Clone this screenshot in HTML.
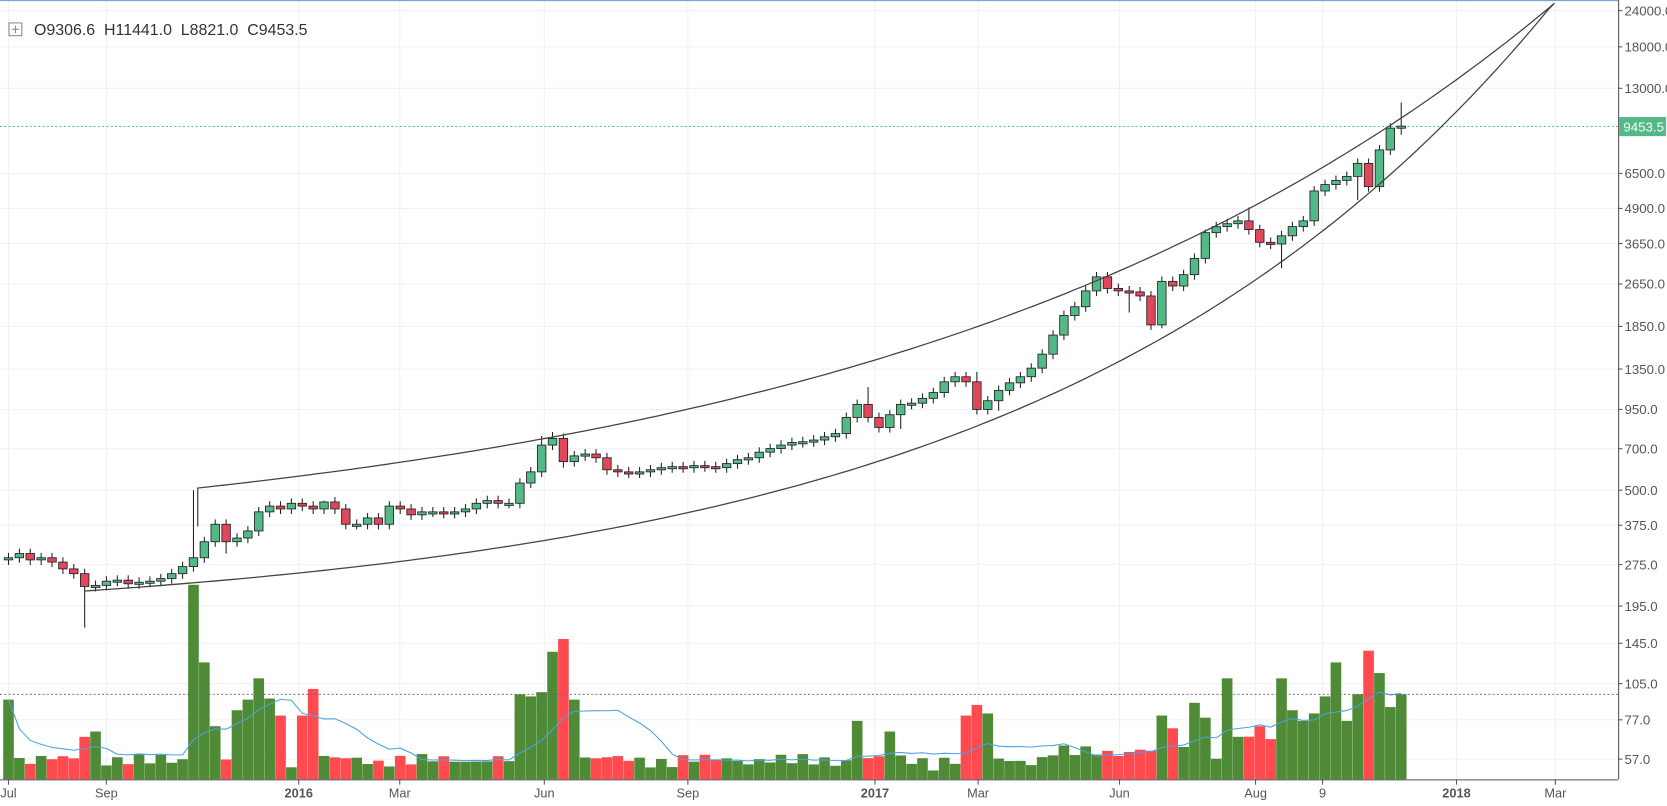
<!DOCTYPE html>
<html><head><meta charset="utf-8"><style>
html,body{margin:0;padding:0;background:#fff;overflow:hidden}
svg{display:block}
text{font-family:"Liberation Sans",sans-serif}
</style></head><body>
<svg id="s" width="1667" height="806" viewBox="0 0 1568 758" xmlns="http://www.w3.org/2000/svg">
<rect width="1568" height="758" fill="#fff"/>
<g id="grid" stroke="#eef1f4" stroke-width="1"></g>
<line x1="0" y1="0.5" x2="1522" y2="0.5" stroke="#5b9bd5" stroke-width="1"/>
<g id="vol"></g>
<polyline id="ma" fill="none" stroke="#4aa3df" stroke-width="1"/>
<line x1="0" y1="653" x2="1522" y2="653" stroke="#666" stroke-dasharray="2,2" stroke-width="0.8"/>
<line x1="0" y1="119" x2="1522" y2="119" stroke="#4cb0a0" stroke-dasharray="2,2" stroke-width="0.8"/>
<g id="c"></g>
<polyline id="up" fill="none" stroke="#444" stroke-width="1.2"/>
<polyline id="lo" fill="none" stroke="#444" stroke-width="1.2"/>
<line x1="1522.5" y1="0" x2="1522.5" y2="733" stroke="#555"/>
<line x1="0" y1="733.5" x2="1522" y2="733.5" stroke="#555"/>
<g id="yl" font-size="12.5" fill="#555"></g>
<rect x="1523" y="110" width="44" height="18" fill="#53b987"/>
<text x="1527" y="123.5" font-size="12.5" fill="#fff">9453.5</text>
<g id="xl" font-size="12" fill="#555"></g>
<rect x="8.5" y="21.5" width="12" height="12" fill="none" stroke="#888"/>
<line x1="14.5" y1="24" x2="14.5" y2="31" stroke="#888"/><line x1="11" y1="27.5" x2="18" y2="27.5" stroke="#888"/>
<text x="32" y="33" font-size="15" fill="#333">O9306.6 &#160;H11441.0 &#160;L8821.0 &#160;C9453.5</text>
</svg>
<script>
var NS="http://www.w3.org/2000/svg";
function el(p,t,a,tx){var e=document.createElementNS(NS,t);for(var k in a)e.setAttribute(k,a[k]);if(tx)e.textContent=tx;document.getElementById(p).appendChild(e);return e;}
var yl=[[24000,10],[18000,44],[13000,83],[6500,163],[4900,196],[3650,229],[2650,267],[1850,307],[1350,347],[950,385],[700,422],[500,461],[375,494],[275,531],[195,570],[145,605],[105,643],[77,677],[57,714]];
yl.forEach(function(v){el("grid","line",{x1:0,y1:v[1],x2:1522,y2:v[1]});el("yl","line",{x1:1522,y1:v[1],x2:1526,y2:v[1],stroke:"#555"});el("yl","text",{x:1528,y:v[1]+4.5},v[0].toFixed(1));});
el("yl","text",{x:1528,y:123.5},"9000.0");
var xl=[["Jul",8],["Sep",100],["2016",281],["Mar",376],["Jun",512],["Sep",647],["2017",823],["Mar",920],["Jun",1053],["Aug",1181],["9",1244],["2018",1370],["Mar",1463]];
xl.forEach(function(v){el("grid","line",{x1:v[1],y1:0,x2:v[1],y2:733});el("xl","line",{x1:v[1],y1:733,x2:v[1],y2:738,stroke:"#555"});var t=el("xl","text",{x:v[1],y:750,"text-anchor":"middle"},v[0]);if(v[0]=="2016"||v[0]=="2017"||v[0]=="2018")t.setAttribute("font-weight","bold");});
var up=["186,495"],lo=[];
for(var x=186;x<=1462;x+=8){up.push(x+","+(527-50.5*Math.exp(0.0016*x)).toFixed(1));}
up.push("1462,3");
for(var x=80;x<=1462;x+=8){lo.push(x+","+(588-27.2*Math.exp(0.0021*x)).toFixed(1));}
lo.push("1462,3");
document.getElementById("up").setAttribute("points",up.join(" "));
document.getElementById("lo").setAttribute("points",lo.join(" "));
function Y(p){return 10+(Math.log10(24000)-Math.log10(p))*268.3;}
var C=[290,300,285,290,280,265,255,230,232,240,242,235,238,240,245,255,270,290,330,380,330,340,360,420,440,430,450,440,430,455,430,380,380,400,380,440,430,410,420,420,415,420,430,450,460,450,450,530,580,720,760,630,660,670,650,590,580,575,580,590,600,605,600,610,605,600,620,640,650,680,700,720,735,740,750,770,790,900,1000,900,830,920,1000,1010,1050,1100,1200,1250,1200,960,1030,1120,1190,1250,1340,1500,1750,2050,2200,2500,2800,2550,2500,2480,2400,1900,2700,2600,2850,3250,4000,4200,4300,4400,4100,3700,3650,3900,4200,4400,5600,5900,6100,6300,7000,5800,7800,9300,9453];
var n=C.length,x0=8,dx=(1318-x0)/(n-1);
function sh(o){var r={};for(var k in o){var i=+k;r[i>=60?i+2:i]=o[k];}return r;}
var H=sh({7:165,17:500,20:300,29:460,49:775,50:800,51:600,77:1150,80:820,87:1300,89:950,101:2100,104:1850,108:4100,112:4900,115:3000,122:5200});
var vh=[];
for(var i=0;i<n;i++){
 var c=C[i],o=i?C[i-1]:285;var x=x0+i*dx;var upc=c>=o;
 var hi=Math.max(o,c)*1.04,lw=Math.min(o,c)*0.96;
 if(H[i]){if(H[i]>Math.max(o,c))hi=H[i];else lw=H[i];}
 if(i==n-1){o=9306.6;lw=8821;hi=11441;}
 el("c","line",{x1:x,y1:Y(hi),x2:x,y2:Y(lw),stroke:"#222","stroke-width":1});
 var t=Y(Math.max(o,c)),b=Y(Math.min(o,c));if(b-t<2){b=t+2;}
 el("c","rect",{x:x-4,y:t,width:8,height:b-t,fill:upc?"#53b987":"#e0475b",stroke:"#222","stroke-width":0.8});
 var h=8+10*Math.abs(Math.sin(i*1.7))+6*Math.abs(Math.sin(i*0.37));
 if(i>95)h+=8;if(i>112)h+=10;
 vh.push([x,h,upc]);
}
var ov=sh({0:75,3:22,7:40,8:45,17:183,18:110,19:50,21:65,22:75,23:95,24:76,25:60,27:60,28:85,47:80,48:78,49:82,50:120,51:132,52:75,76:55,79:45,86:60,87:70,88:62,104:60,105:48,107:72,108:58,110:95,111:40,113:50,115:95,116:65,117:55,118:62,119:78,120:110,121:55,122:120});
ov[n-4]=121;ov[n-3]=100;ov[n-2]=68;ov[n-1]=80;ov[n-5]=80;
for(var i=0;i<n;i++){var v=vh[i];if(ov[i]!==undefined)v[1]=ov[i];
 el("vol","rect",{x:v[0]-5,y:733-v[1],width:10,height:v[1],fill:v[2]?"#4f8a36":"#ff4a4f"});}
var pts=[];
for(var i=0;i<n;i++){var s=0,k=0;for(var j=Math.max(0,i-9);j<=i;j++){s+=vh[j][1];k++;}pts.push(vh[i][0]+","+(733-s/k).toFixed(1));}
document.getElementById("ma").setAttribute("points",pts.join(" "));
</script>
</body></html>
